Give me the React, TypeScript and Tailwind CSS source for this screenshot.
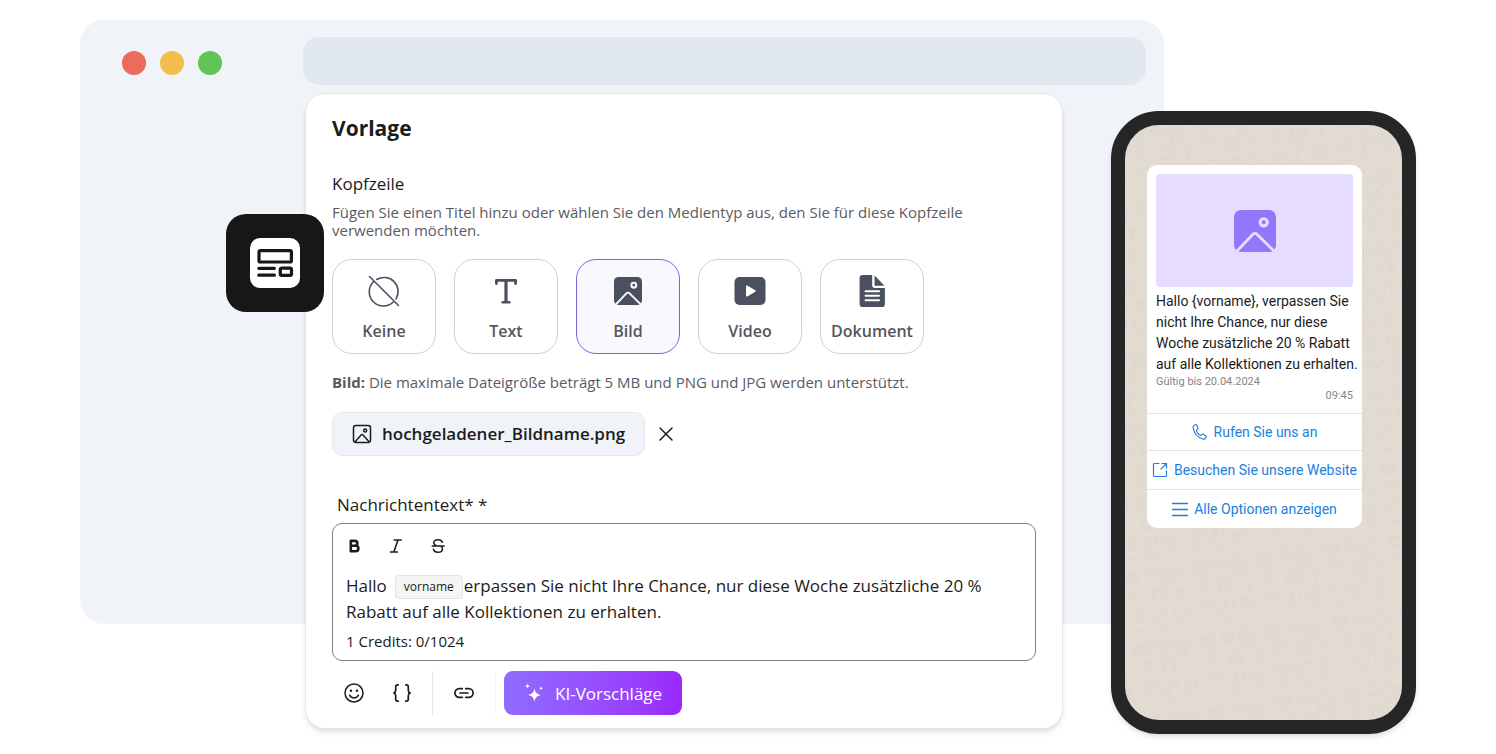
import React, { useState } from "react";

type HeaderType = "none" | "text" | "image" | "video" | "document";

interface HeaderOption {
  id: HeaderType;
  label: string;
  icon: React.ReactNode;
}

const NoneIcon = () => (
  <svg viewBox="0 0 32 32" className="size-8" fill="none" stroke="currentColor" strokeWidth="1.6" strokeLinecap="round">
    <path d="M8.8 4.5A14 14 0 0 1 28 23.8" />
    <path d="M5.5 6.8A14 14 0 0 0 25.3 27" />
    <path d="M1.5 1.5 30.5 30.5" />
  </svg>
);

const TextIcon = () => (
  <svg viewBox="0 0 32 32" className="size-8" fill="none" stroke="currentColor" strokeWidth="2.8" strokeLinecap="round" strokeLinejoin="round">
    <path d="M6.4 8.6V5.4h19.2v3.2" />
    <path d="M16 5.4v21.9" strokeWidth="3.2" strokeLinecap="butt" />
    <path d="M12.6 27.3h6.8" strokeWidth="2.4" />
  </svg>
);

interface ImageIconProps {
  className: string;
  gap: string;
}

const ImageIcon = ({ className, gap }: ImageIconProps) => (
  <svg viewBox="0 0 28 28" className={className} fill="none">
    <rect width="28" height="28" rx="4.6" fill="currentColor" />
    <circle cx="19.8" cy="8.2" r="2.4" stroke={gap} strokeWidth="2.1" />
    <path d="M1.4 28 12.6 16.2a1.8 1.8 0 0 1 2.7 0L27.4 28" stroke={gap} strokeWidth="1.9" />
  </svg>
);

const VideoIcon = () => (
  <svg viewBox="0 0 31 28" className="h-7 w-8">
    <rect width="31" height="28" rx="5" fill="currentColor" />
    <path d="M11.5 9.2v9.6c0 .7.7 1 1.3.7l8-4.8c.6-.3.6-1 0-1.4l-8-4.8c-.6-.3-1.3 0-1.3.7Z" fill="#fff" />
  </svg>
);

const DocumentIcon = () => (
  <svg viewBox="0 0 25 31" className="h-8 w-[26px]">
    <path d="M3.5 0h9.2v10.2c0 1.4 1 2.4 2.4 2.4H25V28a3 3 0 0 1-3 3H3.5A3 3 0 0 1 .5 28V3a3 3 0 0 1 3-3Z" fill="currentColor" />
    <path d="M15 .6v9.7h9.6Z" fill="currentColor" />
    <path d="M6.3 15.7h13M6.3 20.1h13M6.3 24.5h13" stroke="#fff" strokeWidth="2" strokeLinecap="round" />
  </svg>
);

const TemplateBadge = () => (
  <div className="absolute top-30 -left-20 flex size-[98px] items-center justify-center rounded-[20px] bg-[#171717]">
    <svg viewBox="0 0 50 50" className="size-[50px]" fill="none" stroke="#171717" strokeWidth="3.2" strokeLinecap="round">
      <rect width="50" height="50" rx="10" fill="#fff" stroke="none" />
      <rect x="9" y="12.6" width="32.4" height="11.4" rx="1.6" />
      <path d="M8.8 30.3h15.6M8.8 37.2h15.6" />
      <rect x="30.3" y="30.2" width="11.2" height="7.2" rx="1.6" />
    </svg>
  </div>
);

const options: HeaderOption[] = [
  { id: "none", label: "Keine", icon: <NoneIcon /> },
  { id: "text", label: "Text", icon: <TextIcon /> },
  { id: "image", label: "Bild", icon: <ImageIcon className="size-7" gap="#f9f8ff" /> },
  { id: "video", label: "Video", icon: <VideoIcon /> },
  { id: "document", label: "Dokument", icon: <DocumentIcon /> },
];

const BrowserBackdrop = () => (
  <div className="col-start-1 row-start-1 mr-[252px] mb-[110px] flex items-start rounded-3xl bg-[#f0f4f8] pt-[17px] pr-[18px] pl-[42px]">
    <div className="mt-[14px] flex w-[181px] shrink-0 gap-[14px]">
      <span className="size-6 rounded-full bg-[#ed6a5f]" />
      <span className="size-6 rounded-full bg-[#f3bd4e]" />
      <span className="size-6 rounded-full bg-[#60c554]" />
    </div>
    <div className="h-12 flex-1 rounded-2xl bg-[#e2e8f0]" />
  </div>
);

const FormatBar = () => (
  <div className="flex gap-6 px-3 pt-[13px]">
    <button type="button" aria-label="Fett" className="size-[18px]">
      <svg viewBox="0 0 18 18" fill="none" stroke="currentColor" strokeWidth="2.6" strokeLinejoin="round">
        <path d="M5.8 3.9h4.1a2.400 2.400 0 0 1 0 4.900H5.800ZM5.800 8.800h4.900a2.700 2.700 0 0 1 0 5.400H5.800Z" />
      </svg>
    </button>
    <button type="button" aria-label="Kursiv" className="size-[18px]">
      <svg viewBox="0 0 18 18" fill="none" stroke="currentColor" strokeWidth="1.6" strokeLinecap="round">
        <path d="M7.2 3h7M3.4 15h7M11 3 6.800 15" />
      </svg>
    </button>
    <button type="button" aria-label="Durchgestrichen" className="size-[18px]">
      <svg viewBox="0 0 18 18" fill="none" stroke="currentColor" strokeWidth="1.5" strokeLinecap="round">
        <path d="M13.4 5.2C12.8 3.4 11.2 2.7 9 2.7c-2.5 0-4.2 1.2-4.2 3.1 0 1.6 1.2 2.5 3.2 3.2M4.4 12.3c.5 2 2.2 3 4.6 3 2.7 0 4.5-1.3 4.5-3.3 0-1.3-.6-2.2-1.7-2.9M3.2 9h12" />
      </svg>
    </button>
  </div>
);

const EditorTools = () => (
  <div className="mt-[10px] flex h-11 items-center">
    <button type="button" aria-label="Emoji" className="ml-3">
      <svg viewBox="0 0 20 20" className="size-5" fill="none" stroke="currentColor" strokeWidth="1.5" strokeLinecap="round">
        <circle cx="10" cy="10" r="9" />
        <path d="M5.6 12.2a4.9 4.9 0 0 0 8.8 0" />
        <circle cx="7" cy="7.7" r="1.2" fill="currentColor" stroke="none" />
        <circle cx="13" cy="7.7" r="1.2" fill="currentColor" stroke="none" />
      </svg>
    </button>
    <button type="button" aria-label="Variable" className="ml-7">
      <svg viewBox="0 0 20 20" className="size-5" fill="none" stroke="currentColor" strokeWidth="1.7" strokeLinecap="round" strokeLinejoin="round">
        <path d="M6.2 1.8h-.6C4.2 1.8 3.7 2.6 3.7 4v3.2C3.7 8.8 3 9.6 1.8 10c1.2.4 1.9 1.2 1.9 2.8V16c0 1.4.5 2.2 1.9 2.2h.6" />
        <path d="M13.8 1.8h.6c1.4 0 1.9.8 1.9 2.2v3.2c0 1.6.7 2.4 1.9 2.8-1.2.4-1.9 1.2-1.9 2.8V16c0 1.4-.5 2.2-1.9 2.2h-.6" />
      </svg>
    </button>
    <span className="ml-5 h-11 w-px bg-gray-200" />
    <button type="button" aria-label="Link" className="ml-[21px]">
      <svg viewBox="0 0 20 20" className="size-5" fill="none" stroke="currentColor" strokeWidth="1.7" strokeLinecap="round">
        <path d="M8.3 14.3H5.2a4.3 4.3 0 0 1 0-8.600h3.100M11.700 5.700h3.100a4.300 4.300 0 0 1 0 8.600h-3.100M6 10h8" />
      </svg>
    </button>
    <span className="ml-[21px] h-11 w-px bg-gray-100" />
    <button type="button" className="ml-2 flex h-11 items-center gap-[11px] rounded-[9px] bg-linear-to-r from-[#8f6bff] to-[#9b27fb] px-5 text-[17px] font-medium text-white">
      <svg viewBox="0 0 20 20" className="size-5" fill="currentColor">
        <path d="M10.5 5.2c.8 4.2 2 5.5 6.3 6.8-4.3 1.3-5.5 2.6-6.3 6.8-.8-4.2-2-5.5-6.3-6.8 4.3-1.3 5.5-2.6 6.3-6.8Z" />
        <path d="M3.5.2c.3 1.8.8 2.3 2.8 2.900-2 .6-2.500 1.100-2.800 2.900C3.200 4.200 2.700 3.700.7 3.100 2.700 2.500 3.200 2 3.500.2ZM17 3.200c.2 1.200.6 1.600 2 2-1.400.4-1.800.8-2 2-.2-1.200-.6-1.600-2-2 1.400-.4 1.800-.8 2-2Z" />
      </svg>
      KI-Vorschläge
    </button>
  </div>
);

const TemplateCard = () => {
  const [selected, setSelected] = useState<HeaderType>("image");
  const [fileName, setFileName] = useState<string>("hochgeladener_Bildname.png");

  return (
    <section className="relative min-w-0 flex-1 self-start rounded-[20px] border border-[#e5e7eb] bg-white px-[26px] pt-5 pb-[13px] shadow-md">
      <TemplateBadge />
      <h1 className="text-[21px] leading-7 font-bold">Vorlage</h1>
      <h2 className="mt-[30px] text-[17px] leading-6">Kopfzeile</h2>
      <p className="mt-[7px] max-w-[660px] text-[15px] leading-[18px] text-[#5b5b5f]">
        Fügen Sie einen Titel hinzu oder wählen Sie den Medientyp aus, den Sie für diese Kopfzeile verwenden möchten.
      </p>

      <div className="mt-5 flex gap-[18px] text-[#4b5060]">
        {options.map((option) => (
          <button key={option.id} type="button" aria-pressed={selected === option.id} onClick={() => setSelected(option.id)} className={`flex h-[95px] w-[104px] flex-col items-center rounded-[20px] border pt-[15px] ${selected === option.id ? "border-[#7c66dc] bg-[#f9f8ff]" : "border-[#cfcfd4] bg-white"}`}>
            <span className="flex h-8 items-center">{option.icon}</span>
            <span className="mt-3 text-[16px] leading-6 font-semibold text-[#55565c]">{option.label}</span>
          </button>
        ))}
      </div>

      <p className="mt-[18px] text-[15px] leading-5 text-[#5b5b5f]">
        <strong className="font-bold">Bild:</strong> Die maximale Dateigröße beträgt 5 MB und PNG und JPG werden unterstützt.
      </p>

      <div className="mt-5 flex items-center gap-[14px]">
        <div className="flex h-11 items-center gap-[10px] rounded-[10px] border border-[#e4e9f0] bg-[#f0f4f8] px-[19px] text-[17px] font-semibold">
          <svg viewBox="0 0 20 20" className="size-5" fill="none" stroke="currentColor" strokeWidth="1.5" strokeLinejoin="round">
            <rect x="1.5" y="1.5" width="17" height="17" rx="2.4" />
            <circle cx="13.2" cy="6.6" r="1.5" />
            <path d="m3 18 6.3-7.2a1 1 0 0 1 1.5 0l6.5 7.2" />
          </svg>
          {fileName}
        </div>
        <button type="button" aria-label="Datei entfernen" onClick={() => setFileName("")}>
          <svg viewBox="0 0 14 14" className="size-[14px]" fill="none" stroke="currentColor" strokeWidth="1.5" strokeLinecap="round">
            <path d="m1 1 12 12M13 1 1 13" />
          </svg>
        </button>
      </div>

      <div id="message-label" className="mt-[37px] pl-[5px] text-[17px] leading-6">Nachrichtentext* *</div>
      <div className="mt-[6px] rounded-[10px] border border-[#7f8090] pb-[9px]">
        <FormatBar />
        <div role="textbox" aria-multiline="true" aria-labelledby="message-label" contentEditable suppressContentEditableWarning className="px-[13px] pt-[18px] text-[17px] leading-[26px] outline-none">
          <span>Hallo</span>
          <span contentEditable={false} className="mr-px ml-2 inline-block rounded-sm border border-[#e3e3e5] bg-[#f5f5f5] px-2 align-middle text-[12px] leading-[22px]">
            vorname
          </span>
          <span>erpassen Sie nicht Ihre Chance, nur diese Woche zusätzliche 20 % Rabatt auf alle Kollektionen zu erhalten.</span>
        </div>
        <div className="mt-[6px] px-[13px] text-[15px] leading-5">1 Credits: 0/1024</div>
      </div>
      <EditorTools />
    </section>
  );
};

// Faint chat wallpaper behind the message bubble
const ChatWallpaper = () => (
  <svg className="col-start-1 row-start-1 size-full" aria-hidden="true">
    <defs>
      <pattern id="doodles" width="96" height="104" patternUnits="userSpaceOnUse" patternTransform="rotate(-8) scale(0.7)">
        <g fill="none" stroke="#d5cbc0" strokeWidth="1" strokeLinecap="round" strokeLinejoin="round" opacity="0.6">
          <path d="M6 12h18v12H6zM6 12l9 7 9-7" />
          <circle cx="44" cy="16" r="8" />
          <path d="M40 18q4 4 8 0M70 8l5 9 10 1-8 7 2 10-9-5-8 5 2-10-7-7 10-1z" />
          <path d="M12 46c-8-8 4-14 6-6 4-8 14-1 6 6l-6 7zM42 40h16l-2 16H44zM58 44h5v7h-5" />
          <path d="M76 50q8-12 14 0M83 46v14M8 72l14-6 10 8-14 8zM46 70v14a4 4 0 1 1-3-4M46 70l12-3v13" />
          <rect x="70" y="70" width="16" height="12" rx="2" />
          <path d="M74 87h8M10 95h14M36 96q6-8 12 0t12 0M70 96l6-5 6 5" />
        </g>
      </pattern>
    </defs>
    <rect width="100%" height="100%" fill="url(#doodles)" />
  </svg>
);

const PhonePreview = () => (
  <aside className="mt-[18px] grid min-h-[623px] w-[305px] shrink-0 overflow-hidden rounded-[48px] border-[14px] border-[#262626] bg-[#e2dbd2] font-['Roboto',sans-serif] shadow-md">
    <ChatWallpaper />
    <div className="z-10 col-start-1 row-start-1 mx-[22px] mt-10 w-[215px] self-start overflow-hidden rounded-[10px] bg-white">
      <div className="mx-[9px] mt-[9px] flex h-[113px] items-center justify-center rounded-sm bg-[#e5dcff] text-[#9277fa]">
        <ImageIcon className="size-[42px]" gap="#e5dcff" />
      </div>
      <p className="mt-1 pr-1 pl-[9px] text-[14px] leading-[21px] text-[#1b1b1b]">
        {"Hallo {vorname}, verpassen Sie nicht Ihre Chance, nur diese Woche zusätzliche 20 % Rabatt auf alle Kollektionen zu erhalten."}
      </p>
      <div className="px-[9px] text-[11px] leading-[14px] text-[#858585]">
        <p>Gültig bis 20.04.2024</p>
        <p className="text-right">09:45</p>
      </div>
      <div className="mt-[10px] divide-y divide-[#e3e3e3] border-t border-[#e3e3e3] text-[14px] text-[#1a7fe0]">
        <button type="button" className="flex h-[37px] w-full items-center justify-center gap-[6px]">
          <svg viewBox="0 0 16 16" className="size-4" fill="none" stroke="currentColor" strokeWidth="1.1" strokeLinejoin="round">
            <path d="M2.3 1.2 3.6.7c.5-.2 1 .1 1.2.6l1.1 2.9c.2.5 0 .9-.4 1.2l-.9.6c-.3.2-.3.6-.2.9a10 10 0 0 0 3.7 4.3c.3.2.7.2.9 0l.9-.8c.4-.3.9-.4 1.3-.1l2.6 1.7c.4.3.5.9.2 1.3l-.9 1.3c-.4.6-1.2.8-1.9.6C5.5 13.5 1.7 8.9 1.1 3.3c-.1-.9.3-1.7 1.2-2.1Z" />
          </svg>
          Rufen Sie uns an
        </button>
        <button type="button" className="flex h-[39px] w-full items-center justify-center gap-[6px]">
          <svg viewBox="0 0 16 16" className="size-4" fill="none" stroke="currentColor" strokeWidth="1.2" strokeLinecap="round" strokeLinejoin="round">
            <path d="M7 1.5H2.5a1 1 0 0 0-1 1v11a1 1 0 0 0 1 1h11a1 1 0 0 0 1-1V9M10 1.5h4.5V6M14.5 1.5 8.8 7.2" />
          </svg>
          Besuchen Sie unsere Website
        </button>
        <button type="button" className="flex h-[38px] w-full items-center justify-center gap-[6px]">
          <svg viewBox="0 0 16 16" className="size-4" fill="none" stroke="currentColor" strokeWidth="1.4">
            <path d="M0 2.5h16M0 8.5h16M0 14.5h16" />
          </svg>
          Alle Optionen anzeigen
        </button>
      </div>
    </div>
  </aside>
);

const App: React.FC = () => {
  return (
    <main className="grid bg-white px-20 py-5 font-['Open_Sans',sans-serif] text-[#1b1c20]">
      <BrowserBackdrop />
      <div className="z-10 col-start-1 row-start-1 mt-[73px] ml-[225px] flex gap-12">
        <TemplateCard />
        <PhonePreview />
      </div>
    </main>
  );
};

export default App;
